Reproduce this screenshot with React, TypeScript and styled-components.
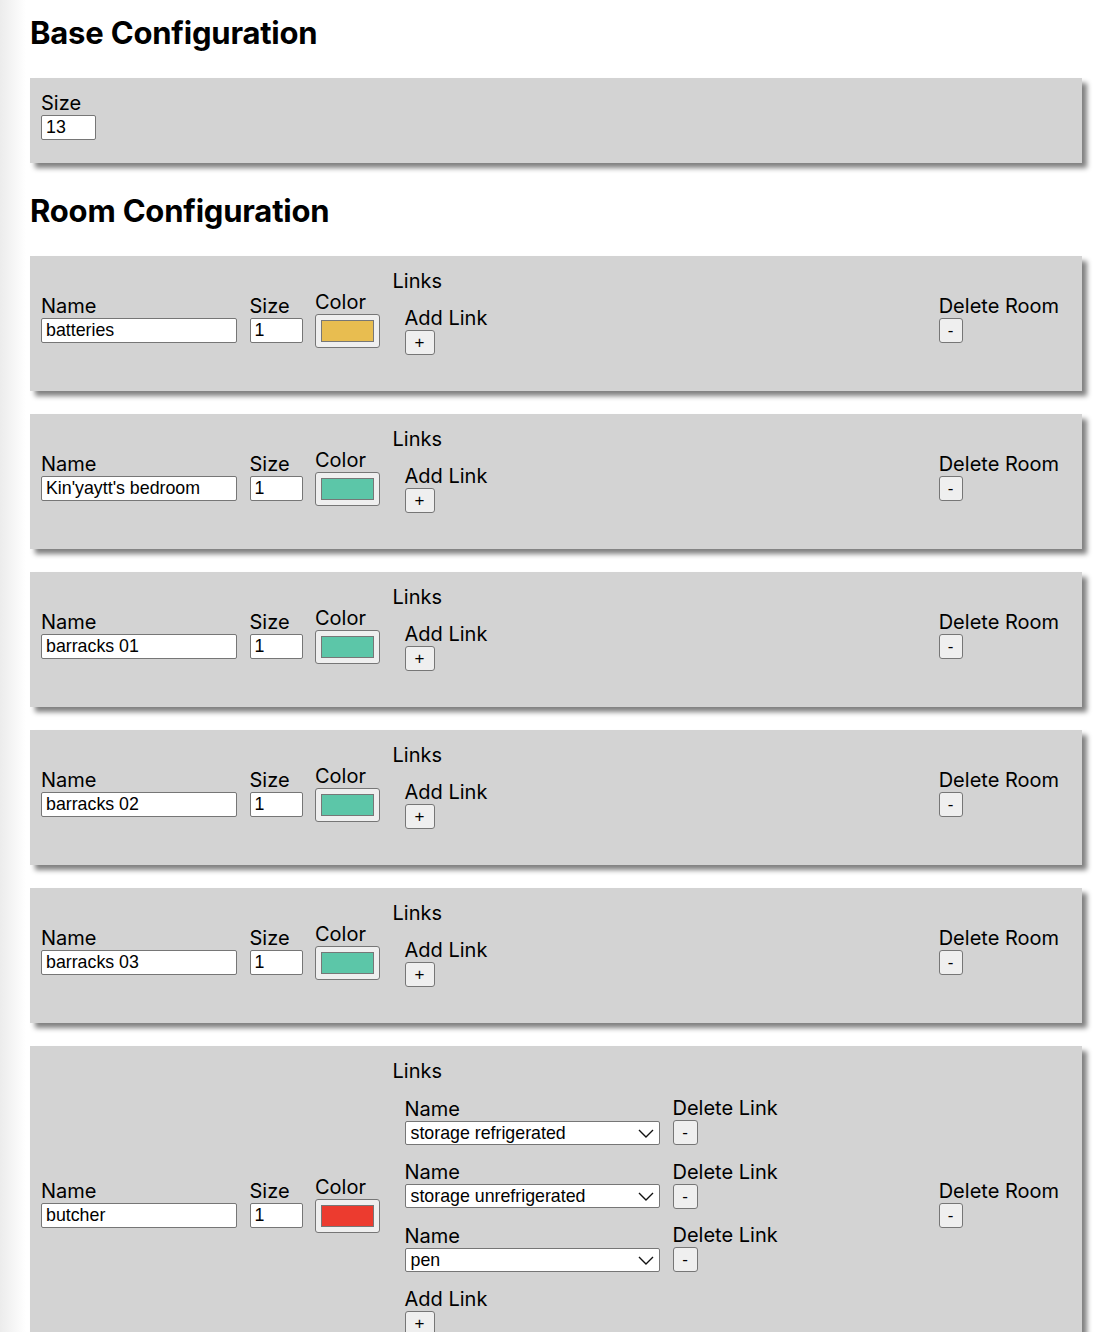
import React from 'react';
import styled, {createGlobalStyle} from 'styled-components';

type LinkType = { name: string };
type RoomType = { name: string; size: number; color: string; links: LinkType[] };

const rooms: RoomType[] = [
    {name: 'batteries', size: 1, color: '#e8bd50', links: []},
    {name: "Kin'yaytt's bedroom", size: 1, color: '#5cc6a8', links: []},
    {name: 'barracks 01', size: 1, color: '#5cc6a8', links: []},
    {name: 'barracks 02', size: 1, color: '#5cc6a8', links: []},
    {name: 'barracks 03', size: 1, color: '#5cc6a8', links: []},
    {
        name: 'butcher', size: 1, color: '#ec3b2f', links: [
            {name: 'storage refrigerated'},
            {name: 'storage unrefrigerated'},
            {name: 'pen'},
        ]
    },
];

const roomNames = ['batteries', "Kin'yaytt's bedroom", 'barracks 01', 'barracks 02', 'barracks 03',
    'storage refrigerated', 'storage unrefrigerated', 'pen', 'butcher'];

const GlobalStyle = createGlobalStyle`
    html {
        background: linear-gradient(90deg, #ececec 0, #ffffff 26px);
    }
    body {
        margin: 0;
        font-family: Inter, "Noto Sans", sans-serif;
        color: #000;
    }
`;

export default function App() {
    return (
        <>
            <GlobalStyle/>
            <Page>
                <Heading>Base Configuration</Heading>
                <Card>
                    <Field>
                        <Label>Size</Label>
                        <TextInput width={55} defaultValue={13}/>
                    </Field>
                </Card>

                <Heading $spaced>Room Configuration</Heading>
                {rooms.map((room, i) => (
                    <Room key={i} room={room}/>
                ))}
            </Page>
        </>
    );
}

function Room({room}: { room: RoomType }) {
    return (
        <Card>
            <Field>
                <Label>Name</Label>
                <TextInput width={196} defaultValue={room.name}/>
            </Field>
            <Field>
                <Label>Size</Label>
                <TextInput width={53} defaultValue={room.size}/>
            </Field>
            <Field>
                <Label>Color</Label>
                <ColorBox>
                    <Swatch $color={room.color}/>
                </ColorBox>
            </Field>
            <Field>
                <Label>Links</Label>
                <LinkList>
                    {room.links.map((link, i) => (
                        <LinkRow key={i}>
                            <Field>
                                <Label>Name</Label>
                                <SelectWrap>
                                    <Select defaultValue={link.name}>
                                        {roomNames.map(n => <option key={n} value={n}>{n}</option>)}
                                    </Select>
                                    <Chevron viewBox="0 0 16 9" width="16" height="9">
                                        <path d="M1 1 L8 8 L15 1" fill="none" stroke="#111" strokeWidth="1.4"/>
                                    </Chevron>
                                </SelectWrap>
                            </Field>
                            <Field>
                                <Label>Delete Link</Label>
                                <Button width={25}>-</Button>
                            </Field>
                        </LinkRow>
                    ))}
                    <Field>
                        <Label>Add Link</Label>
                        <Button width={30}>+</Button>
                    </Field>
                </LinkList>
            </Field>
            <DeleteField>
                <Label>Delete Room</Label>
                <Button width={24}>-</Button>
            </DeleteField>
        </Card>
    );
}

const Page = styled.div`
    padding: 14px 36px 0 30px;
`;

// the card above has a 23px bottom margin, which collapses with this one
const Heading = styled.h2<{ $spaced?: boolean }>`
    font-size: 31px;
    font-weight: 700;
    line-height: 38px;
    margin: ${p => p.$spaced ? '29px' : '0'} 0 26px;
    letter-spacing: -0.2px;
`;

const Card = styled.section`
    display: flex;
    align-items: center;
    gap: 12.5px;
    background: #d3d3d3;
    box-shadow: 5px 5px 5px #808080;
    padding: 13px 23px 23px 11px;
    margin-bottom: 23px;
`;

const Field = styled.div`
    display: flex;
    flex-direction: column;
    align-items: flex-start;
`;

const DeleteField = styled(Field)`
    margin-left: auto;
`;

const Label = styled.span`
    font-size: 20px;
    line-height: 24px;
    white-space: nowrap;
`;

const TextInput = styled.input<{ width: number }>`
    box-sizing: border-box;
    width: ${p => p.width}px;
    height: 25px;
    padding: 1px 4px;
    border: 1px solid #767676;
    border-radius: 2px;
    background: #fff;
    font-family: "Liberation Sans", Arial, sans-serif;
    font-size: 17.8px;
    color: #000;
    outline: none;
`;

const ColorBox = styled.div`
    box-sizing: border-box;
    width: 65px;
    height: 34px;
    padding: 5px;
    background: #efefef;
    border: 1px solid #767676;
    border-radius: 3px;
`;

const Swatch = styled.div<{ $color: string }>`
    box-sizing: border-box;
    height: 100%;
    background: ${p => p.$color};
    border: 1px solid #777;
`;

const LinkList = styled.div`
    display: flex;
    flex-direction: column;
    gap: 14.5px;
    margin: 13px 0;
    padding-left: 12px;
`;

const LinkRow = styled.div`
    display: flex;
    align-items: center;
    gap: 13px;
`;

const SelectWrap = styled.div`
    position: relative;
    width: 255px;
`;

const Select = styled.select`
    box-sizing: border-box;
    width: 100%;
    height: 24px;
    padding: 0 28px 0 5px;
    appearance: none;
    border: 1px solid #767676;
    border-radius: 2px;
    background: #fff;
    font-family: "Liberation Sans", Arial, sans-serif;
    font-size: 17.8px;
    color: #000;
    outline: none;
`;

const Chevron = styled.svg`
    position: absolute;
    right: 6px;
    top: 8px;
    pointer-events: none;
`;

const Button = styled.button<{ width: number }>`
    box-sizing: border-box;
    width: ${p => p.width}px;
    height: 25px;
    padding: 0;
    background: #efefef;
    border: 1px solid #767676;
    border-radius: 3px;
    font-family: "Liberation Sans", Arial, sans-serif;
    font-size: 17px;
    color: #000;
    line-height: 1;
`;
